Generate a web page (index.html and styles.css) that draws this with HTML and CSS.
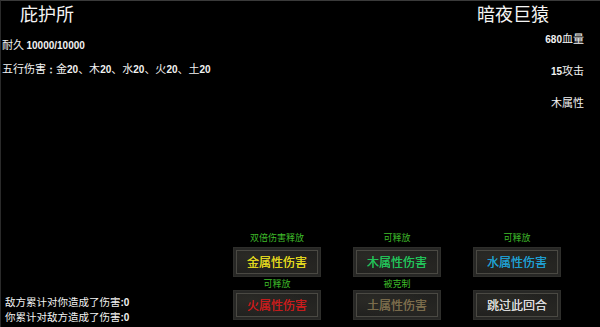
FILE: index.html
```html
<!DOCTYPE html>
<html lang="zh">
<head>
<meta charset="utf-8">
<title>庇护所</title>
<link rel="stylesheet" href="styles.css">
</head>
<body>
<div class="screen">
  <div class="top">
    <div class="player">
      <div class="title">庇护所</div>
      <div class="stat first">耐久 <b class="num">10000/10000</b></div>
      <div class="stat second">五行伤害<b class="num">：</b>金<b class="num">20</b>、木<b class="num">20</b>、水<b class="num">20</b>、火<b class="num">20</b>、土<b class="num">20</b></div>
    </div>
    <div class="enemy">
      <div class="title enemy-title">暗夜巨猿</div>
      <div class="stat estat"><b class="num">680</b>血量</div>
      <div class="stat estat"><b class="num">15</b>攻击</div>
      <div class="stat estat">木属性</div>
    </div>
  </div>
  <div class="bottom">
    <div class="totals">
      <div class="stat">敌方累计对你造成了伤害<b class="num">:0</b></div>
      <div class="stat">你累计对敌方造成了伤害<b class="num">:0</b></div>
    </div>
    <div class="actions">
      <div class="tag tag-top">双倍伤害释放</div>
      <div class="tag tag-top">可释放</div>
      <div class="tag tag-top">可释放</div>
      <button class="btn metal">金属性伤害</button>
      <button class="btn wood">木属性伤害</button>
      <button class="btn water">水属性伤害</button>
      <div class="tag">可释放</div>
      <div class="tag">被克制</div>
      <div class="tag"></div>
      <button class="btn fire">火属性伤害</button>
      <button class="btn earth">土属性伤害</button>
      <button class="btn skip">跳过此回合</button>
    </div>
  </div>
</div>
</body>
</html>
```
FILE: styles.css
```css
html, body {
  margin: 0;
  padding: 0;
  background: #000;
}
body {
  width: 600px;
  height: 327px;
  overflow: hidden;
}
.screen {
  box-sizing: border-box;
  width: 600px;
  height: 327px;
  border-top: 1px solid #3a3a3a;
  border-left: 1px solid #2a2a2a;
  display: flex;
  flex-direction: column;
  color: #fff;
  font-family: "Noto Sans CJK SC", sans-serif;
}
.top {
  display: flex;
  justify-content: space-between;
}
.title {
  font-size: 18px;
  line-height: 24px;
  color: #f4f4f4;
}
.player {
  display: flex;
  flex-direction: column;
  align-items: flex-start;
}
.player .title {
  padding-left: 19px;
}
.stat {
  font-size: 11px;
  line-height: 14px;
  color: #f2f2f2;
  white-space: nowrap;
}
.num {
  font-family: "Liberation Sans", sans-serif;
  font-weight: bold;
  font-size: 10px;
}
.player .first {
  margin-top: 12px;
  padding-left: 1px;
}
.player .second {
  margin-top: 8px;
  padding-left: 1px;
}
.enemy {
  display: flex;
  flex-direction: column;
  align-items: flex-end;
  padding-right: 16px;
}
.enemy-title {
  margin-right: 35px;
}
.estat {
  margin-top: 16px;
}
.enemy-title + .estat {
  margin-top: 6px;
}
.bottom {
  margin-top: auto;
  display: flex;
  align-items: flex-end;
  justify-content: space-between;
  padding-right: 39px;
  padding-bottom: 7px;
}
.totals {
  padding-left: 4px;
  margin-bottom: -5px;
  display: flex;
  flex-direction: column;
}
.totals .stat {
  font-size: 10.5px;
  line-height: 14px;
}
.actions {
  display: grid;
  grid-template-columns: repeat(3, 88px);
  grid-template-rows: 18px 30px 13px 30px;
  column-gap: 32px;
}
.tag {
  font-size: 9px;
  line-height: 12px;
  color: #3fbc2a;
  text-align: center;
  align-self: end;
}
.tag-top {
  align-self: center;
}
.btn {
  margin: 0;
  padding: 0;
  font-family: "Noto Sans CJK SC", sans-serif;
  font-size: 12px;
  line-height: 28px;
  border: 1px solid #2e2e2b;
  background:
    radial-gradient(ellipse at 20% 30%, rgba(60, 58, 50, 0.35), transparent 60%),
    radial-gradient(ellipse at 80% 70%, rgba(50, 48, 42, 0.35), transparent 60%),
    #21211f;
  box-shadow: inset 0 0 0 2px #272725, inset 0 0 0 3px #4a4943;
  text-align: center;
  text-shadow: 0 0 0.6px currentColor;
  cursor: pointer;
}
.metal { color: #e2d81e; }
.wood { color: #22c45a; }
.water { color: #1f9fd2; }
.fire { color: #c81c1c; }
.earth { color: #7c6d4c; }
.skip { color: #dcdcdc; }
```
